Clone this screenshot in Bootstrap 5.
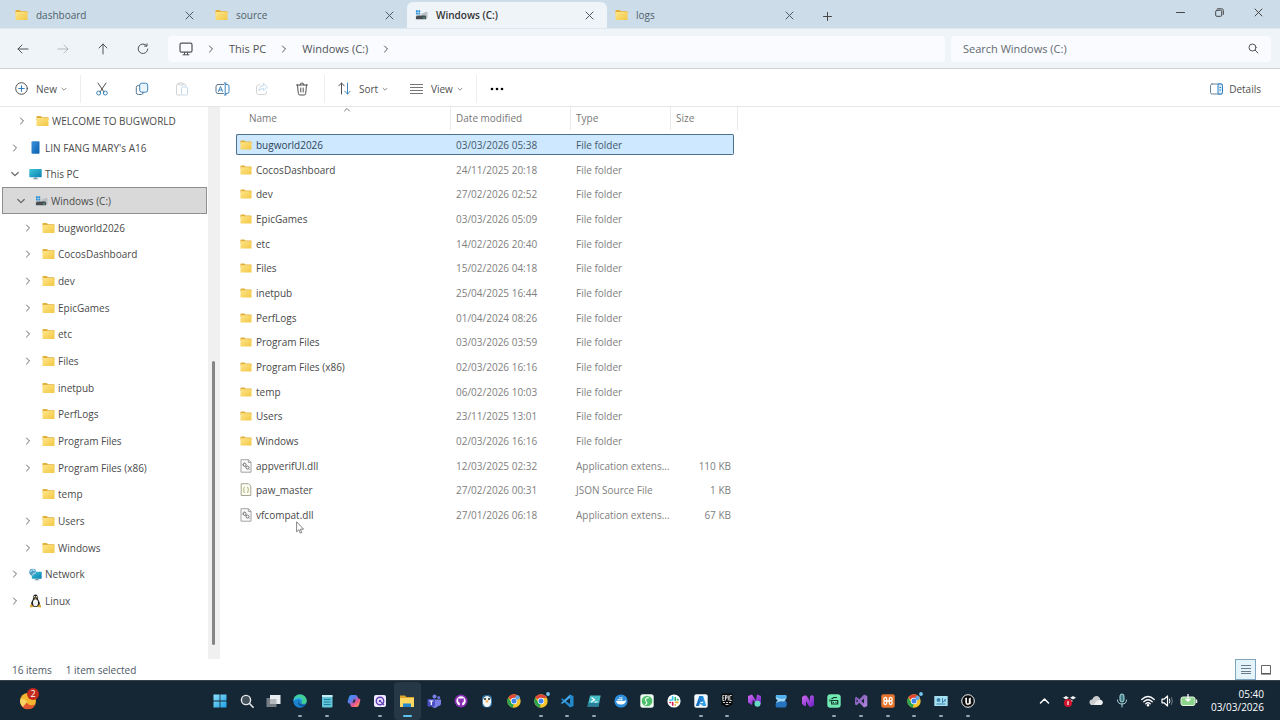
<!DOCTYPE html>
<html lang="en">
<head>
<meta charset="utf-8">
<meta name="viewport" content="width=device-width, initial-scale=1">
<title>Windows (C:)</title>
<link href="https://cdn.jsdelivr.net/npm/bootstrap@5.3.0/dist/css/bootstrap.min.css" rel="stylesheet">
<style>
body{font-family:"Open Sans","Noto Sans",sans-serif;font-size:10px;line-height:16px;color:#484848;background:#fff}
button,input{font:inherit;color:inherit;background:none;border:0;padding:0}
a{color:inherit;text-decoration:none}
svg{display:block;flex:none}
.ln{fill:none;stroke:currentColor;stroke-linecap:round;stroke-linejoin:round}
.titlebar{height:28px;background:#ccdde9}
.strip{padding-left:7px}
.tab{width:200px;height:28px;padding:2px 13px 0 8px;color:#4f5f6b}
.tab.on{background:#eff4f9;border-radius:6px 6px 0 0;margin-top:2px;height:26px;padding-top:0;color:#333;font-weight:600}
.tab button{color:#505a62}
.winctl{padding-right:2px}
.winctl button{width:39px;height:24px;color:#444}
.navrow{height:41px;background:#eff4f9;border-top:1px solid #dfe8f1;border-bottom:1px solid #cdd4da;padding:0 9px 0 3px;color:#505357}
.sq{width:40px;height:32px}
.field{height:26px;background:#f9fbfe;border-radius:4px;font-size:11px}
.crumbs{margin-left:5px;margin-right:6px;padding-left:11px}
.crumbs .sep{margin:0 14px}
.search{width:320px;padding:0 12px}
.search input{outline:0;color:#5f6468}
.search input::placeholder{color:#646a70;opacity:1}
.tools{height:38px;padding-top:2px;border-bottom:1px solid #e6e6e6;color:#505050}
.tools .dd{opacity:.7}
.acts{padding:0 2px 0 1px}
.rule{width:1px;height:28px;background:#eee}
.t-new{width:80px;padding-left:15px}
.t-sort{width:85px;padding-left:13px}
.t-view{width:66px}
.t-det{gap:6px;margin-right:19px}
.side{width:207px}
.tree{margin:0;padding:0;list-style:none}
.tree a{height:27px;display:flex;align-items:center;padding-left:11px;color:#4a4a4a}
.tree li:nth-child(3n) a{height:26px}
.tree .d1 a{padding-left:18px}
.tree .d2 a{padding-left:24px}
.tree .tw{width:8px;margin-right:10px;color:#666}
.tree .ic{width:13px;margin-right:3px}
.tree .sel a{margin-left:2px;padding-left:14px;background:#d9d9d9;border:1px solid #8e8e8e}
.track{width:12px;margin-left:1px;background:#f0f0f0;padding:254px 5px 14px 4px}
.thumb{background:#858585;border-radius:2px;width:3px}
.files{width:502px;margin:-4px 0 0 16px;table-layout:fixed;border-collapse:separate;border-spacing:0 4px}
.files th{height:23px;font-weight:400;color:#777;padding:0 5px 2px;border-right:1px solid #e9e9e9;position:relative}
.files th:first-child{padding-left:13px}
.files td{height:21px;padding:0 0 0 5px;color:#808080;white-space:nowrap;line-height:16px}
.files tbody tr:nth-child(3n) td{height:20px}
.files td:first-child{padding-left:4px;color:#484848}
.files td:nth-child(4){text-align:right;padding-right:3px}
.files .sel td:nth-child(-n+4){background:#cde8ff;border:solid #4b6f8c;border-width:1px 0;color:#44586a}
.files .sel td:first-child{border-left-width:1px;border-radius:2px 0 0 2px;padding-left:3px;color:#2f4558}
.files .sel td:nth-child(4){border-right-width:1px;border-radius:0 2px 2px 0}
.caret{position:absolute;left:107px;top:0}
.pointer{position:absolute;left:296px;top:414px}
.status{height:21px;color:#4d5866;padding:0 8px 0 12px;gap:14px}
.view-on{width:21px;height:21px;background:#e5f3fb;border:1px solid #7fa4c0}
.taskbar{height:40px;background:#152635;border-top:1px solid #35414a;color:#fff}
.widgets{width:207px;padding-left:19px}
.count{position:absolute;left:8px;top:-4px;width:12px;height:12px;border-radius:6px;background:#c42b1c;font-size:9px;line-height:12px;text-align:center}
.apps{width:774px;display:grid;grid-template-columns:repeat(29,1fr)}
.apps button{height:38px;display:flex;align-items:center;justify-content:center;position:relative;border-radius:4px}
.apps .run::after{content:"";position:absolute;bottom:3px;width:4px;height:2px;border-radius:1px;background:#9aa5ad}
.apps .cur{background:#263746}
.apps .cur::after{width:9px;background:#5fc3f2}
.tray{gap:13px}
.quick{gap:6px}
.clock{line-height:13px;text-align:right;padding-right:16px}
</style>
</head>
<body class="d-flex flex-column min-vh-100">
<svg width="0" height="0" class="position-absolute" aria-hidden="true">
<defs>
<linearGradient id="gy" x1="0" y1="0" x2="1" y2="1"><stop offset="0" stop-color="#ffe68a"/><stop offset="1" stop-color="#f2c744"/></linearGradient>
<linearGradient id="gb" x1="0" y1="0" x2="1" y2="1"><stop offset="0" stop-color="#3cc8d8"/><stop offset="1" stop-color="#0b7fb0"/></linearGradient>
<linearGradient id="gp" x1="0" y1="0" x2="1" y2="1"><stop offset="0" stop-color="#3b93dc"/><stop offset="1" stop-color="#0b5fae"/></linearGradient>
<linearGradient id="gw" x1="0" y1="0" x2="1" y2="1"><stop offset="0" stop-color="#8be2fb"/><stop offset="1" stop-color="#1f9fe6"/></linearGradient>
<linearGradient id="gv" x1="0" y1="0" x2="1" y2="1"><stop offset="0" stop-color="#d46bf2"/><stop offset="1" stop-color="#6a1fc4"/></linearGradient>
<linearGradient id="gs" x1="0" y1="0" x2="1" y2="1"><stop offset="0" stop-color="#7a4fb0"/><stop offset="1" stop-color="#b48ae0"/></linearGradient>
<linearGradient id="gc" x1="0" y1="0" x2="1" y2="1"><stop offset="0" stop-color="#2fa7ef"/><stop offset=".35" stop-color="#5b7cf0"/><stop offset=".65" stop-color="#f0548e"/><stop offset="1" stop-color="#f9b13c"/></linearGradient>
</defs>
<symbol id="folder" viewBox="0 0 13 12"><path d="M.5 1.700Q.5 1 1.300 1H4.800L6 2.300H11.700Q12.500 2.300 12.500 3.100V5H.5Z" fill="#e2b03a"/><rect x=".5" y="3" width="12" height="8" rx=".6" fill="url(#gy)"/></symbol>
<symbol id="drive" viewBox="0 0 14 12"><path d="M1 1h2v2H1zM3.600 1h2v2h-2zM1 3.600h2v1.900H1zM3.600 3.600h2v1.900h-2z" fill="#258fd8"/><path d="M7 4.500l5.500-2 1 .8v6.200H7z" fill="#b9c0c6"/><path d="M2 6.500h9l1 1.300v2.700H1V7.800z" fill="#474d52"/><path d="M9 8.700h1.500v1H9z" fill="#5be08b"/></symbol>
<symbol id="phone" viewBox="0 0 13 13"><rect x="2.500" y=".3" width="8" height="12.400" rx="1" fill="url(#gp)"/></symbol>
<symbol id="pc" viewBox="0 0 13 12"><rect x=".3" y="1" width="12.400" height="8.300" rx=".7" fill="url(#gb)"/><path d="M5.500 9.300h2v1.200h1.700v.8H3.800v-.8h1.700z" fill="#6a8ea2"/></symbol>
<symbol id="net" viewBox="0 0 14 13"><rect x="3" y="3.500" width="10.700" height="7.500" rx=".6" fill="url(#gb)"/><path d="M7.500 11h2v1h1.500v.7H6V12h1.500z" fill="#6a8ea2"/><circle cx="4" cy="4" r="3.700" fill="#4f9cc4"/><path d="M1 3q2 1 2.500-2M4 7.500q-.5-2.500 3.500-3M4.500.6q-1 2 2.500 2" stroke="#c7ecf6" fill="none"/></symbol>
<symbol id="tux" viewBox="0 0 13 14"><path d="M6.500.4c-2 0-2.300 1.400-2.200 3.300C4.200 5.500 2 7.500 2 10.300c0 1.700 1.500 2.700 4.500 2.700s4.500-1 4.500-2.700c0-2.800-2.200-4.800-2.300-6.600C8.800 1.800 8.500.4 6.500.4Z" fill="#222"/><ellipse cx="6.500" cy="8.700" rx="2.500" ry="3.500" fill="#f5f5f5"/><circle cx="5.600" cy="2.700" r=".6" fill="#fff"/><circle cx="7.400" cy="2.700" r=".6" fill="#fff"/><path d="M5.200 3.800h2.600L6.500 5z" fill="#e9b52c"/><path d="M2.300 9.900l2.500 3-3.900.5L1 11.300zM10.700 9.900l-2.500 3 3.900.5-.1-2.100z" fill="#d9aa3a"/></symbol>
<symbol id="dll" viewBox="0 0 12 14"><path d="M1 .7h7.500L11 3.200v10H1z" fill="#fbfbfb" stroke="#a2a2a2"/><path d="M8.300.7v2.800H11" fill="none" stroke="#a2a2a2"/><circle cx="4.600" cy="5.800" r="1.500" fill="none" stroke="#707070"/><circle cx="7.500" cy="8.600" r="1.500" fill="none" stroke="#707070"/><path d="M4.300 3.500v.7M2.600 5.800h.7M9.300 10.500l-.5-.6M5.500 7l.7.700" stroke="#707070"/></symbol>
<symbol id="json" viewBox="0 0 12 14"><path d="M1.200.7H8.500L10.800 3v9.500H1.200z" fill="#fcfcf6" stroke="#a6a68c"/><path d="M4.900 4.200q-1 0-1 1v1l-.6.700.6.700v1q0 1 1 1M7.100 4.200q1 0 1 1v1l.6.700-.6.700v1q0 1-1 1" fill="none" stroke="#a3a250" stroke-width=".9"/></symbol>
<symbol id="rt" viewBox="0 0 8 8"><path class="ln" d="M2.500 1l3 3-3 3"/></symbol>
<symbol id="dn" viewBox="0 0 8 8"><path class="ln" d="M.8 2.500L4 5.700l3.200-3.200" stroke-width="1.200"/></symbol>
<symbol id="dd" viewBox="0 0 6 6"><path class="ln" d="M1 2.200l2 2 2-2" stroke-width=".9"/></symbol>
<symbol id="x" viewBox="0 0 9 9"><path class="ln" d="M1 1l7 7M8 1L1 8"/></symbol>
<symbol id="chrome" viewBox="0 0 14 14"><circle cx="7" cy="7" r="6.700" fill="#f6c52c"/><path d="M7 7L1.200 3.700A6.700 6.700 0 0 1 12.900 4H7z" fill="#e0443a"/><path d="M7 7l-1 6.600A6.700 6.700 0 0 1 1.200 3.600L4.300 8.500z" fill="#2da44e"/><circle cx="7" cy="7" r="3.200" fill="#fff"/><circle cx="7" cy="7" r="2.500" fill="#3f83ec"/></symbol>
</svg>

<header>
<div class="titlebar d-flex">
<div class="strip d-flex" role="tablist">
<div class="tab d-flex align-items-center gap-2" role="tab"><svg width="13" height="12"><use href="#folder"/></svg><span class="flex-grow-1">dashboard</span><button aria-label="Close dashboard"><svg width="9" height="9"><use href="#x"/></svg></button></div>
<div class="tab d-flex align-items-center gap-2" role="tab"><svg width="13" height="12"><use href="#folder"/></svg><span class="flex-grow-1">source</span><button aria-label="Close source"><svg width="9" height="9"><use href="#x"/></svg></button></div>
<div class="tab on d-flex align-items-center gap-2" role="tab" aria-selected="true"><svg width="13" height="12"><use href="#drive"/></svg><span class="flex-grow-1">Windows (C:)</span><button aria-label="Close Windows (C:)"><svg width="9" height="9"><use href="#x"/></svg></button></div>
<div class="tab d-flex align-items-center gap-2" role="tab"><svg width="13" height="12"><use href="#folder"/></svg><span class="flex-grow-1">logs</span><button aria-label="Close logs"><svg width="9" height="9"><use href="#x"/></svg></button></div>
</div>
<button class="sq h-100 d-flex align-items-center justify-content-center pt-1" aria-label="New tab"><svg width="9" height="9" viewBox="0 0 9 9"><path class="ln" d="M4.500.5v8M.5 4.500h8"/></svg></button>
<div class="winctl d-flex ms-auto">
<button class="d-flex align-items-center justify-content-center" aria-label="Minimise"><svg width="9" height="9" viewBox="0 0 9 9"><path class="ln" d="M.5 4.500h8"/></svg></button>
<button class="d-flex align-items-center justify-content-center" aria-label="Restore"><svg width="9" height="9" viewBox="0 0 9 9"><rect class="ln" x=".7" y="2.300" width="6" height="6" rx="1"/><path class="ln" d="M2.500.8h4.200q1.600 0 1.600 1.600v4"/></svg></button>
<button class="d-flex align-items-center justify-content-center" aria-label="Close"><svg width="9" height="9"><use href="#x"/></svg></button>
</div>
</div>

<div class="navrow d-flex align-items-center">
<button class="sq d-flex align-items-center justify-content-center" aria-label="Back"><svg width="12" height="12" viewBox="0 0 12 12"><path class="ln" d="M11 6H1M5 2L1 6l4 4"/></svg></button>
<button class="sq d-flex align-items-center justify-content-center opacity-50" aria-label="Forward"><svg width="12" height="12" viewBox="0 0 12 12"><path class="ln" d="M1 6h10M7 2l4 4-4 4" opacity=".7"/></svg></button>
<button class="sq d-flex align-items-center justify-content-center" aria-label="Up"><svg width="12" height="12" viewBox="0 0 12 12"><path class="ln" d="M6 11V1M2 5l4-4 4 4"/></svg></button>
<button class="sq d-flex align-items-center justify-content-center" aria-label="Refresh"><svg width="12" height="12" viewBox="0 0 12 12"><path class="ln" d="M9.800 2.800A4.800 4.800 0 1 0 10.800 6M10 .8v2.300H7.500"/></svg></button>
<nav class="field crumbs flex-grow-1 d-flex align-items-center" aria-label="Address">
<svg width="14" height="14" viewBox="0 0 14 14"><rect class="ln" x="1" y="1.200" width="12" height="9" rx="1.500" stroke-width="1.200"/><path class="ln" d="M5.500 10.500v2M8.500 10.500v2M4 12.800h6"/></svg>
<svg class="sep" width="8" height="8"><use href="#rt"/></svg><a href="#">This PC</a>
<svg class="sep" width="8" height="8"><use href="#rt"/></svg><a href="#">Windows (C:)</a>
<svg class="sep" width="8" height="8"><use href="#rt"/></svg>
</nav>
<div class="field search d-flex align-items-center"><input class="flex-grow-1" type="text" placeholder="Search Windows (C:)" aria-label="Search Windows (C:)"><svg width="11" height="11" viewBox="0 0 11 11"><circle class="ln" cx="4.500" cy="4.500" r="3.500"/><path class="ln" d="M7.200 7.200L10 10"/></svg></div>
</div>

<div class="tools d-flex align-items-center">
<button class="t-new d-flex align-items-center gap-2"><svg width="13" height="13" viewBox="0 0 13 13"><circle class="ln" cx="6.500" cy="6.500" r="5.800" stroke="#5b7790"/><path d="M6.500 3.700v5.600M3.700 6.500h5.600" stroke="#2f7fc0" stroke-linecap="round"/></svg><span class="d-flex align-items-center gap-1">New<svg class="dd" width="6" height="6"><use href="#dd"/></svg></span></button>
<div class="rule"></div>
<div class="acts d-flex">
<button class="sq d-flex align-items-center justify-content-center" aria-label="Cut"><svg width="14" height="14" viewBox="0 0 14 14"><path class="ln" d="M3 1l6 9M11 1L5 10" stroke="#666"/><circle cx="3.700" cy="11" r="2" fill="none" stroke="#3d86bf"/><circle cx="10.300" cy="11" r="2" fill="none" stroke="#3d86bf"/></svg></button>
<button class="sq d-flex align-items-center justify-content-center" aria-label="Copy"><svg width="14" height="14" viewBox="0 0 14 14"><rect x="4.700" y="1.200" width="8" height="9" rx="2" fill="#eaf4fc" style="stroke:#3d86bf"/><path class="ln" d="M4.500 3.500H3.300q-2 0-2 2v5q0 2 2 2h3q2 0 2-2" style="stroke:#5b7790"/></svg></button>
<button class="sq d-flex align-items-center justify-content-center opacity-50" aria-label="Paste"><svg width="14" height="14" viewBox="0 0 14 14"><path class="ln" d="M6 13H2.500q-1 0-1-1V3q0-1 1-1H4M8 2h1.500q1 0 1 1v1M4 1h4v2H4z" style="stroke:#aaa"/><rect x="6.500" y="5" width="6" height="8" rx="1" fill="#fff" stroke="#8db9da"/></svg></button>
<button class="sq d-flex align-items-center justify-content-center" aria-label="Rename"><svg width="15" height="14" viewBox="0 0 15 14"><path class="ln" d="M8.500 2.500H3q-2 0-2 2v5q0 2 2 2h5.500" style="stroke:#5b7790"/><path d="M10.500 2.500H12q2 0 2 2v5q0 2-2 2h-1.500M9 1h2.500M9 13h2.500M10.200 1v12" fill="none" stroke="#3d86bf"/><path class="ln" d="M3.500 9.500l2-5 2 5M4.200 8h2.600" style="stroke:#3d86bf"/></svg></button>
<button class="sq d-flex align-items-center justify-content-center opacity-50" aria-label="Share"><svg width="14" height="14" viewBox="0 0 14 14"><path class="ln" d="M5 3H3.500Q1.500 3 1.500 5v5.500q0 2 2 2h6q2 0 2-2V9.500" style="stroke:#aaa"/><path class="ln" d="M8.500 1.500l4 3.500-4 3.500v-2q-3 0-4.500 2.500.3-5 4.500-5.500z" style="stroke:#8db9da"/></svg></button>
<button class="sq d-flex align-items-center justify-content-center" aria-label="Delete"><svg width="14" height="14" viewBox="0 0 14 14"><path class="ln" d="M1.500 3h11M5 3q0-2 2-2t2 2M2.500 3l.8 8.500q.1 1.500 1.500 1.500h4.400q1.400 0 1.500-1.500L11.500 3M5.800 6v4M8.200 6v4"/></svg></button>
</div>
<div class="rule"></div>
<button class="t-sort d-flex align-items-center gap-1"><svg class="me-1" width="13" height="13" viewBox="0 0 13 13"><path class="ln" d="M3.500 12V1M.8 3.800L3.500 1l2.700 2.800"/><path class="ln" d="M9.500 1v11M6.800 9.200L9.500 12l2.700-2.800" style="stroke:#3d86bf"/></svg>Sort<svg class="dd" width="6" height="6"><use href="#dd"/></svg></button>
<button class="t-view d-flex align-items-center gap-1"><svg class="me-1" width="13" height="11" viewBox="0 0 13 11"><path d="M0 1.500h13M0 4.500h13M0 7.500h13M0 10.500h13" stroke="#777"/></svg>View<svg class="dd" width="6" height="6"><use href="#dd"/></svg></button>
<div class="rule"></div>
<button class="sq d-flex align-items-center justify-content-center text-black" aria-label="See more"><svg width="14" height="4" viewBox="0 0 14 4"><circle cx="2" cy="2" r="1.300"/><circle cx="7" cy="2" r="1.300"/><circle cx="12" cy="2" r="1.300"/></svg></button>
<button class="t-det d-flex align-items-center ms-auto"><svg width="13" height="12" viewBox="0 0 13 12"><rect class="ln" x=".5" y="1" width="12" height="10" rx="1.500" style="stroke:#6b8398"/><path d="M8 1h3q1.500 0 1.500 1.500v7q0 1.500-1.500 1.500H8z" fill="#d8ecfb" stroke="#2f7fc0"/><path d="M9.500 4.500H11M9.500 7H11" stroke="#2f7fc0"/></svg>Details</button>
</div>
</header>

<main class="d-flex flex-grow-1 position-relative">
<nav class="side" aria-label="Folders">
<ul class="tree">
<li class="d1"><a href="#"><svg class="tw" height="8"><use href="#rt"/></svg><svg class="ic" height="12"><use href="#folder"/></svg>WELCOME TO BUGWORLD</a></li>
<li><a href="#"><svg class="tw" height="8"><use href="#rt"/></svg><svg class="ic" height="13"><use href="#phone"/></svg>LIN FANG MARY's A16</a></li>
<li><a href="#"><svg class="tw" height="8"><use href="#dn"/></svg><svg class="ic" height="12"><use href="#pc"/></svg>This PC</a></li>
<li class="sel"><a href="#"><svg class="tw" height="8"><use href="#dn"/></svg><svg class="ic" height="12"><use href="#drive"/></svg>Windows (C:)</a></li>
<li class="d2"><a href="#"><svg class="tw" height="8"><use href="#rt"/></svg><svg class="ic" height="12"><use href="#folder"/></svg>bugworld2026</a></li>
<li class="d2"><a href="#"><svg class="tw" height="8"><use href="#rt"/></svg><svg class="ic" height="12"><use href="#folder"/></svg>CocosDashboard</a></li>
<li class="d2"><a href="#"><svg class="tw" height="8"><use href="#rt"/></svg><svg class="ic" height="12"><use href="#folder"/></svg>dev</a></li>
<li class="d2"><a href="#"><svg class="tw" height="8"><use href="#rt"/></svg><svg class="ic" height="12"><use href="#folder"/></svg>EpicGames</a></li>
<li class="d2"><a href="#"><svg class="tw" height="8"><use href="#rt"/></svg><svg class="ic" height="12"><use href="#folder"/></svg>etc</a></li>
<li class="d2"><a href="#"><svg class="tw" height="8"><use href="#rt"/></svg><svg class="ic" height="12"><use href="#folder"/></svg>Files</a></li>
<li class="d2"><a href="#"><svg class="tw" height="8"></svg><svg class="ic" height="12"><use href="#folder"/></svg>inetpub</a></li>
<li class="d2"><a href="#"><svg class="tw" height="8"></svg><svg class="ic" height="12"><use href="#folder"/></svg>PerfLogs</a></li>
<li class="d2"><a href="#"><svg class="tw" height="8"><use href="#rt"/></svg><svg class="ic" height="12"><use href="#folder"/></svg>Program Files</a></li>
<li class="d2"><a href="#"><svg class="tw" height="8"><use href="#rt"/></svg><svg class="ic" height="12"><use href="#folder"/></svg>Program Files (x86)</a></li>
<li class="d2"><a href="#"><svg class="tw" height="8"></svg><svg class="ic" height="12"><use href="#folder"/></svg>temp</a></li>
<li class="d2"><a href="#"><svg class="tw" height="8"><use href="#rt"/></svg><svg class="ic" height="12"><use href="#folder"/></svg>Users</a></li>
<li class="d2"><a href="#"><svg class="tw" height="8"><use href="#rt"/></svg><svg class="ic" height="12"><use href="#folder"/></svg>Windows</a></li>
<li><a href="#"><svg class="tw" height="8"><use href="#rt"/></svg><svg class="ic" height="13"><use href="#net"/></svg>Network</a></li>
<li><a href="#"><svg class="tw" height="8"><use href="#rt"/></svg><svg class="ic" height="14"><use href="#tux"/></svg>Linux</a></li>
</ul>
</nav>
<div class="track d-flex"><div class="thumb"></div></div>
<section>
<table class="files">
<colgroup><col style="width:215px"><col style="width:120px"><col style="width:100px"><col style="width:63px"><col style="width:4px"></colgroup>
<thead><tr><th scope="col">Name<svg class="caret" width="8" height="5" viewBox="0 0 8 5"><path class="ln" d="M1.500 4L4 1.500 6.500 4"/></svg></th><th scope="col">Date modified</th><th scope="col">Type</th><th scope="col" colspan="2">Size</th></tr></thead>
<tbody>
<tr class="sel"><td><div class="d-flex align-items-center gap-1"><svg width="12" height="12"><use href="#folder"/></svg>bugworld2026</div></td><td>03/03/2026 05:38</td><td>File folder</td><td></td></tr>
<tr><td><div class="d-flex align-items-center gap-1"><svg width="12" height="12"><use href="#folder"/></svg>CocosDashboard</div></td><td>24/11/2025 20:18</td><td>File folder</td><td></td></tr>
<tr><td><div class="d-flex align-items-center gap-1"><svg width="12" height="12"><use href="#folder"/></svg>dev</div></td><td>27/02/2026 02:52</td><td>File folder</td><td></td></tr>
<tr><td><div class="d-flex align-items-center gap-1"><svg width="12" height="12"><use href="#folder"/></svg>EpicGames</div></td><td>03/03/2026 05:09</td><td>File folder</td><td></td></tr>
<tr><td><div class="d-flex align-items-center gap-1"><svg width="12" height="12"><use href="#folder"/></svg>etc</div></td><td>14/02/2026 20:40</td><td>File folder</td><td></td></tr>
<tr><td><div class="d-flex align-items-center gap-1"><svg width="12" height="12"><use href="#folder"/></svg>Files</div></td><td>15/02/2026 04:18</td><td>File folder</td><td></td></tr>
<tr><td><div class="d-flex align-items-center gap-1"><svg width="12" height="12"><use href="#folder"/></svg>inetpub</div></td><td>25/04/2025 16:44</td><td>File folder</td><td></td></tr>
<tr><td><div class="d-flex align-items-center gap-1"><svg width="12" height="12"><use href="#folder"/></svg>PerfLogs</div></td><td>01/04/2024 08:26</td><td>File folder</td><td></td></tr>
<tr><td><div class="d-flex align-items-center gap-1"><svg width="12" height="12"><use href="#folder"/></svg>Program Files</div></td><td>03/03/2026 03:59</td><td>File folder</td><td></td></tr>
<tr><td><div class="d-flex align-items-center gap-1"><svg width="12" height="12"><use href="#folder"/></svg>Program Files (x86)</div></td><td>02/03/2026 16:16</td><td>File folder</td><td></td></tr>
<tr><td><div class="d-flex align-items-center gap-1"><svg width="12" height="12"><use href="#folder"/></svg>temp</div></td><td>06/02/2026 10:03</td><td>File folder</td><td></td></tr>
<tr><td><div class="d-flex align-items-center gap-1"><svg width="12" height="12"><use href="#folder"/></svg>Users</div></td><td>23/11/2025 13:01</td><td>File folder</td><td></td></tr>
<tr><td><div class="d-flex align-items-center gap-1"><svg width="12" height="12"><use href="#folder"/></svg>Windows</div></td><td>02/03/2026 16:16</td><td>File folder</td><td></td></tr>
<tr><td><div class="d-flex align-items-center gap-1"><svg width="12" height="14"><use href="#dll"/></svg>appverifUI.dll</div></td><td>12/03/2025 02:32</td><td>Application extens...</td><td>110 KB</td></tr>
<tr><td><div class="d-flex align-items-center gap-1"><svg width="12" height="14"><use href="#json"/></svg>paw_master</div></td><td>27/02/2026 00:31</td><td>JSON Source File</td><td>1 KB</td></tr>
<tr><td><div class="d-flex align-items-center gap-1"><svg width="12" height="14"><use href="#dll"/></svg>vfcompat.dll</div></td><td>27/01/2026 06:18</td><td>Application extens...</td><td>67 KB</td></tr>
</tbody>
</table>
</section>
<svg class="pointer" width="9" height="13" viewBox="0 0 9 13"><path d="M.6.800v10l2.300-2.100 1.400 3.400 1.500-.6-1.400-3.300h3.200z" fill="#fff" stroke="#666" stroke-width=".8"/></svg>
</main>

<div class="status d-flex align-items-center">
<span>16 items</span><span>1 item selected</span>
<div class="d-flex align-items-center gap-1 ms-auto">
<button class="view-on d-flex align-items-center justify-content-center" aria-label="Details view"><svg width="10" height="9" viewBox="0 0 10 9"><path d="M0 .5h10M0 3.500h10M0 6.500h10M0 8.500h10" stroke="#5b6f80" stroke-width=".9"/></svg></button>
<button aria-label="Large icons"><svg width="12" height="10" viewBox="0 0 12 10"><path d="M1.500.5h9v8h-9z" fill="#fff" stroke="#666"/><path d="M1 9h10" stroke="#444"/></svg></button>
</div>
</div>

<footer class="taskbar d-flex align-items-center">
<div class="widgets"><button class="position-relative d-block text-white" aria-label="Widgets"><svg width="18" height="18" viewBox="0 0 18 18"><circle cx="9" cy="9" r="8" fill="#f5b52e"/><path d="M2 13a8 8 0 0 0 14.500-.8Q11 15 8 11T2 13Z" fill="#e0562c"/><path d="M1.200 7.500Q5 5 8 10l-4 5Q.7 12 1.200 7.500Z" fill="#f7d264"/></svg><span class="count">2</span></button></div>
<div class="apps">
<button aria-label="Start"><svg width="14" height="14" viewBox="0 0 14 14"><path d="M.5.5h6.100v6.100H.5zM7.400.5h6.100v6.100H7.400zM.5 7.400h6.100v6.100H.5zM7.400 7.400h6.100v6.100H7.400z" fill="url(#gw)"/></svg></button>
<button aria-label="Search"><svg width="14" height="14" viewBox="0 0 14 14"><circle cx="6" cy="6" r="4.600" fill="#44525e" stroke="#e4e8eb" stroke-width="1.400"/><path d="M9.500 9.500l3.600 3.700" stroke="#e4e8eb" stroke-width="1.600" stroke-linecap="round"/></svg></button>
<button aria-label="Task view"><svg width="15" height="14" viewBox="0 0 15 14"><rect x=".5" y="4" width="10" height="9" fill="#777f86"/><rect x="4" y="1" width="10.500" height="9" fill="#e9ecee"/><path d="M4 5h6.500v5H4z" fill="#b5babe"/></svg></button>
<button class="run" aria-label="Edge"><svg width="14" height="14" viewBox="0 0 14 14"><circle cx="7" cy="7" r="6.700" fill="#1b83d2"/><path d="M.4 6A6.700 6.700 0 0 1 13.700 7q0 3-3.200 3-2.500 0-2-1.700Q9.500 6 6.500 5 3 4 .4 6Z" fill="#43cf8d"/><path d="M.4 6Q3 2 7 3.300q4 1.200 2.500 4.500Q8.800 4.500 5 5 2 5.300.4 7Z" fill="#33bde0"/><path d="M5 7q-1 4 4 5.600 2.500 0 3.700-2.200Q6.500 12 5 7Z" fill="#10518f"/></svg></button>
<button class="run" aria-label="Notepad"><svg width="14" height="14" viewBox="0 0 14 14"><rect x="2" y="1" width="10.500" height="12.500" rx="1" fill="#63c3d9"/><path d="M2 1h10.500v2H2z" fill="#c6eef5"/><path d="M4 5.500h6.500M4 8h6.500M4 10.500h6.500" stroke="#1e7f9a"/></svg></button>
<button aria-label="Copilot"><svg width="14" height="14" viewBox="0 0 14 14"><path d="M4.500 1h4q1.500 0 2 1.500l.6 2H12q1.600.2 1.300 2L12 11q-.5 2-2.500 2h-4q-1.500 0-2-1.500l-.6-2H2Q.4 9.300.7 7.500L2 3q.5-2 2.500-2Z" fill="url(#gc)"/><path d="M6.700 5.500h2L7.500 8.800h-2z" fill="#263340"/></svg></button>
<button class="run" aria-label="Chat"><svg width="14" height="14" viewBox="0 0 14 14"><rect x="1" y="1" width="12" height="12" rx="2" fill="#f1e9ff"/><circle cx="7" cy="7" r="3.700" fill="none" stroke="#6244b5" stroke-width="1.500"/><circle cx="7" cy="7" r="1.300" fill="#6244b5"/><path d="M8 8l3 3" stroke="#6244b5" stroke-width="1.300"/></svg></button>
<button class="run cur" aria-label="File Explorer"><svg width="16" height="14" viewBox="0 0 16 14"><path d="M1 1.500h5l1.500 1.500H15v9.500H1z" fill="#dba52c"/><path d="M1 4h14v9H1z" fill="#fcd863"/><path d="M4 13V9.500h8V13z" fill="#2588cb"/></svg></button>
<button aria-label="Teams"><svg width="14" height="14" viewBox="0 0 14 14"><circle cx="7.500" cy="2.500" r="2" fill="#7b83eb"/><circle cx="11.700" cy="3.500" r="1.500" fill="#6a71da"/><path d="M4.500 5.500H14V9q0 3-2.500 3l-1 .5Q9 14 7.500 14 4.500 13.500 4.500 10Z" fill="#7a80e6"/><rect x=".5" y="5" width="7.500" height="7.500" rx="1" fill="#4a50c4"/><path d="M2.300 7h4M4.300 7v4" stroke="#fff" stroke-width="1.200"/></svg></button>
<button aria-label="GitHub Desktop"><svg width="14" height="14" viewBox="0 0 14 14"><circle cx="7" cy="7" r="6.500" fill="#8a2fb5"/><circle cx="7" cy="7" r="4.700" fill="#fff"/><path d="M4.500 4l1.500.7q1-.3 2 0L9.500 4l.3 1.800q.5 2.500-1.600 3V12H5.800V8.800Q3.700 8.300 4.200 5.800Z" fill="#8a2fb5"/></svg></button>
<button aria-label="Penguin"><svg width="14" height="14" viewBox="0 0 14 14"><rect x="2" y="1" width="10" height="12.500" rx="4" fill="#2d6d9c"/><ellipse cx="7" cy="7.500" rx="4.200" ry="5.500" fill="#f4f6f6"/><circle cx="5" cy="5" r="1" fill="#222"/><circle cx="9" cy="5" r="1" fill="#222"/><path d="M5.300 6.500h3.400L7 9z" fill="#f4a52c"/></svg></button>
<button aria-label="Chrome"><svg width="14" height="14" viewBox="0 0 14 14"><use href="#chrome"/><circle cx="10.500" cy="3.500" r="2.300" fill="#62abe4"/></svg></button>
<button class="run" aria-label="Chrome, profile 2"><svg width="18" height="18" viewBox="0 0 18 18"><use href="#chrome" x="2" y="2" width="14" height="14"/><circle cx="16" cy="2" r="1.900" fill="#74c6f1"/></svg></button>
<button class="run" aria-label="Visual Studio Code"><svg width="14" height="14" viewBox="0 0 14 14"><path d="M10 .5L13.500 2v10L10 13.500 1 5.200l1-1L10 10z" fill="#2489ca"/><path d="M10 .5v3.600L2 9.900l-1-1z" fill="#41a9ec"/></svg></button>
<button class="run" aria-label="PowerShell"><svg width="14" height="14" viewBox="0 0 14 14"><path d="M3 1.500h10.700L11.500 12.500H.5z" fill="#46bcc5"/><path d="M1.300 9h11l-.7 3.500H.5z" fill="#2a7f9c"/><path d="M4.500 3.500l3 2.200L4 8M7.500 8h3" stroke="#fff" fill="none" stroke-width="1.200"/></svg></button>
<button aria-label="Docker"><svg width="14" height="14" viewBox="0 0 14 14"><circle cx="7" cy="7" r="6.600" fill="#2f8fdc"/><path d="M2 7h8q1.500-.2 2-1.500 0 5-5 5Q3 10.800 2 7ZM3.500 5h1.300v1.400H3.500zM5.300 5h1.300v1.400H5.300zM7.100 5h1.300v1.400H7.100zM5.300 3.200h1.300v1.400H5.300zM7.100 3.200h1.300v1.400H7.100z" fill="#fff"/></svg></button>
<button aria-label="Green app"><svg width="14" height="14" viewBox="0 0 14 14"><rect x=".3" y=".3" width="13.400" height="13.400" rx="2.500" fill="#eefbf1"/><circle cx="7" cy="7" r="5.300" fill="#4dc06b"/><path d="M8.800 3.500Q4 4 6 7t-1.200 3.800" fill="none" stroke="#e7f9ea" stroke-width="1.300"/></svg></button>
<button aria-label="Slack"><svg width="14" height="14" viewBox="0 0 14 14"><circle cx="7" cy="7" r="6.600" fill="#fff"/><g stroke-width="1.700" stroke-linecap="round"><path d="M5.700 2.800v2.700" stroke="#36c5f0"/><path d="M3 6h2" stroke="#36c5f0"/><path d="M8.300 3.500v2.700" stroke="#2eb67d"/><path d="M10.500 5.700h.5" stroke="#2eb67d"/><path d="M8.700 8.300H11" stroke="#ecb22e"/><path d="M8.300 10.800v.3" stroke="#ecb22e"/><path d="M3 8.500h.4M5.700 8.500v2.500" stroke="#d3205c"/></g></svg></button>
<button class="run" aria-label="Azure"><svg width="14" height="14" viewBox="0 0 14 14"><rect x=".3" y=".3" width="13.400" height="13.400" rx="2" fill="#f4faff"/><path d="M5.300 2H8L5 12H1.800z" fill="#1a6fc0"/><path d="M7.500 2h1.700l3.200 10H9L5 9h4z" fill="#35a2e8"/><path d="M5.300 2h3L9.500 7 5 9z" fill="#1f7fd0"/></svg></button>
<button class="run" aria-label="Epic Games"><svg width="14" height="15" viewBox="0 0 14 15"><path d="M1.500.5h11v11L7 14.500 1.500 11.500z" fill="#0b0c0d"/><path d="M4.500 2.500h-1.700v5h1.700M2.800 5h1.500M5.500 7.500v-5H7V5H5.500M8.300 2.500v5M11.500 3V2.500H9.800v5h1.700V7M3 9.500h2M6 9.500h2M9 9.500h2M5.500 11.500h3" fill="none" stroke="#e9e9e9" stroke-width=".9"/></svg></button>
<button aria-label="Visual Studio Installer"><svg width="15" height="15" viewBox="0 0 15 15"><path d="M1 3l4-1.500 4 6 1-6 4 1.500v8L10 12 6 6.500 5 12 1 9.500z" fill="url(#gv)"/><circle cx="10.500" cy="10.700" r="3" fill="#66dcc4"/></svg></button>
<button aria-label="Blue app"><svg width="14" height="14" viewBox="0 0 14 14"><path d="M2 1h10q1.500 1 .5 3L10 6H3Q1 4.500 2 1Z" fill="#53b1ed"/><path d="M4 6h7q2.500 2 1.500 6-.5 1.500-2 1.500H2.500Q0 10 4 6Z" fill="#2574bd"/><path d="M1.800 3Q7 6.500 12.500 4l-2.300 3.500Q5 6.500 2 9 3 6.500 4 6 2 5 1.800 3Z" fill="#a5d8f5"/></svg></button>
<button aria-label="Visual Studio Preview"><svg width="14" height="14" viewBox="0 0 14 14"><path d="M1 3l3-1.700q1.500.2 2.500 1.700L9 7V2.500l2-1.500 2 1.500v9L10 13q-1.500 0-2.500-1.500L5 7v5l-2-.3-2-2z" fill="url(#gv)"/></svg></button>
<button class="run" aria-label="Android device"><svg width="14" height="14" viewBox="0 0 14 14"><rect x=".3" y=".3" width="13.400" height="13.400" rx="3" fill="#70e9b2"/><path d="M4.700 6.500h6V10h-6zM3 7.500V5.500M4.500 5L7 3.500h3" fill="none" stroke="#16372c" stroke-width="1.200"/><path d="M6 8.500h1M8.500 8.500h1" stroke="#16372c"/></svg></button>
<button class="run" aria-label="Visual Studio"><svg width="14" height="14" viewBox="0 0 14 14"><path d="M10 .6L13.300 2v10L10 13.400 5.500 8.800 2.500 11.300 1 10.500v-7l1.500-.8 3 2.500zM10 4.400L7.200 7 10 9.600zM2.500 5.400v3.200L4.200 7z" fill="url(#gs)" fill-rule="evenodd"/></svg></button>
<button class="run" aria-label="XAMPP"><svg width="14" height="14" viewBox="0 0 14 14"><rect x=".3" y=".3" width="13.400" height="13.400" rx="2" fill="#e8752e"/><path d="M5.700 7H4.200Q2.800 7 2.800 5.300T4.300 3.500 5.700 5v4q0 1.500-1.400 1.500T2.800 9 4.200 7H9.800q1.400 0 1.400-1.700T9.700 3.500 8.300 5v4q0 1.500 1.400 1.500T11.200 9 9.800 7" fill="none" stroke="#fff" stroke-width="1.300"/></svg></button>
<button class="run" aria-label="Chrome, profile 3"><svg width="18" height="18" viewBox="0 0 18 18"><use href="#chrome" x="2" y="2" width="14" height="14"/><circle cx="12.500" cy="6" r="2.200" fill="#62abe4"/><circle cx="16" cy="2" r="1.900" fill="#74c6f1"/></svg></button>
<button class="run" aria-label="Control panel"><svg width="14" height="14" viewBox="0 0 14 14"><rect x=".3" y="2" width="13.400" height="10" rx=".5" fill="#a8e0f3"/><circle cx="4.500" cy="6" r="2" fill="#3c84ad"/><path d="M8.500 4v4M11 5v3M2.500 10h9M8 9l4-4" stroke="#3c84ad"/></svg></button>
<button class="run" aria-label="Unreal Engine"><svg width="14" height="14" viewBox="0 0 14 14"><circle cx="7" cy="7" r="6.300" fill="#0c0c0d" stroke="#f2f2f2"/><path d="M3.500 5Q4.500 3.500 6 3.500V9q.7.800 1.800 0V4.500l2-1V9l1-.7Q9.500 11 7 11T4.300 8.500V5Z" fill="#f5f5f5"/></svg></button>
</div>
<div class="tray ms-auto d-flex align-items-center">
<button class="text-white" aria-label="Hidden icons"><svg width="11" height="8" viewBox="0 0 11 8"><path class="ln" d="M1.500 6l4-4 4 4" stroke-width="1.500"/></svg></button>
<svg width="13" height="14" viewBox="0 0 13 14"><path d="M3 2l3 1.700L3 5.500 0 3.700zM10 2l3 1.700-3 1.800-3-1.800zM6.500 5L10 7 6.500 9.500z" fill="#f2f2f2"/><circle cx="5" cy="9" r="4" fill="#cf142b"/><path d="M5 7v4" stroke="#fff" stroke-width="1.200"/></svg>
<svg width="14" height="11" viewBox="0 0 14 11"><path d="M3.500 10Q.5 10 .5 7.200T3.300 4.500Q4.500 1 7.500 1t4 4q2.200.3 2.200 2.500T11.500 10Z" fill="#c9cdd0"/><path d="M5 10q2-5 6.500-5 2.200.3 2.200 2.500T11.500 10Z" fill="#eceeef"/></svg>
<svg width="12" height="15" viewBox="0 0 12 15"><rect x="4" y="1" width="4" height="8" rx="2" fill="#427c86" stroke="#a9dce1"/><path class="ln" d="M1.500 7q0 4 4.500 4t4.500-4M6 11v3" style="stroke:#a9dce1"/></svg>
<button class="quick d-flex align-items-center text-white" aria-label="Network, volume and battery">
<svg width="14" height="12" viewBox="0 0 14 12"><path class="ln" d="M.8 4.500Q7-1.500 13.200 4.500M2.800 6.700q4.200-4 8.400 0M4.800 8.800q2.200-2 4.400 0" stroke-width="1.300"/><circle cx="7" cy="10.300" r="1.200" fill="#fff"/></svg>
<svg width="13" height="12" viewBox="0 0 13 12"><path class="ln" d="M1 4.200h2L6.500 1v10L3 7.800H1z" stroke-width="1.200"/><path class="ln" d="M8.500 4q1 2 0 4"/><path class="ln" d="M10.500 2.500q2 3.500 0 7" opacity=".4"/></svg>
<svg width="18" height="13" viewBox="0 0 18 13"><rect x="1" y="3" width="14" height="8.500" rx="2" fill="#8dd48c" stroke="#e7f7e4"/><path d="M16.500 5.500v3.500" stroke="#e7f7e4" stroke-width="1.500"/><path d="M8 0v7M5.500 4.700L8 7.200l2.500-2.500" stroke="#fff" fill="none" stroke-width="1.300"/></svg>
</button>
<div class="clock">05:40<br>03/03/2026</div>
</div>
</footer>
<script src="https://cdn.jsdelivr.net/npm/bootstrap@5.3.0/dist/js/bootstrap.bundle.min.js"></script>
</body>
</html>
